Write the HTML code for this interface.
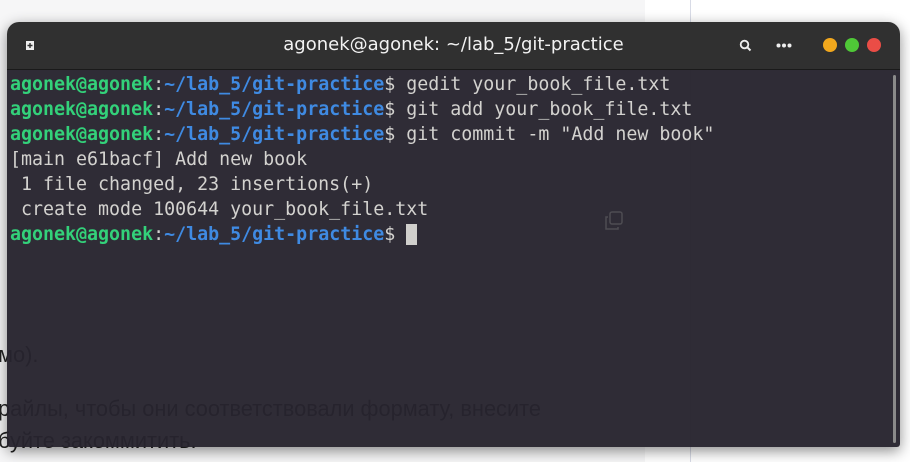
<!DOCTYPE html>
<html><head><meta charset="utf-8"><style>
body{margin:0;width:910px;height:462px;overflow:hidden;background:#fff;position:relative;font-family:"Liberation Sans",sans-serif}
.bgl{position:absolute;left:0;top:0;width:645px;height:462px;background:#f6f6f7}
.vl{position:absolute;left:690px;top:0;width:1px;height:462px;background:#d8dbe6}
.bt{position:absolute;left:-2px;font-size:22px;color:#222;white-space:nowrap;transform:scaleX(0.99);transform-origin:left}
.win{position:absolute;left:7px;top:22px;width:893px;height:425px;border-radius:12px 12px 3px 3px;overflow:hidden;box-shadow:0 4px 14px rgba(0,0,0,.45)}
.tb{height:47px;background:#303030;position:relative;border-bottom:1px solid #1a1a1a}
.title{position:absolute;left:0;right:0;top:12px;text-align:center;font-family:"DejaVu Sans","Liberation Sans",sans-serif;font-size:18px;color:#f2f2f2}
.body{position:absolute;top:48px;left:0;right:0;bottom:0;background:rgba(38,35,46,.96)}
.term{position:absolute;left:3px;top:2px;font-family:"DejaVu Sans Mono","Liberation Mono",monospace;font-size:18.3px;line-height:25px;color:#d3d2cf;white-space:pre;font-weight:normal}
.g{color:#33d17a;font-weight:bold}.b{color:#3f8ae2;font-weight:bold}
.dot{position:absolute;top:16px;width:14px;height:14px;border-radius:50%}
</style></head><body>
<div class="bgl"></div><div class="vl"></div>
<div class="bt" style="top:342px">мо).</div>
<div class="bt" style="top:396px">райлы, чтобы они соответствовали формату, внесите</div>
<div class="bt" style="top:428px">буйте закоммитить.</div>
<div class="win">
 <div class="tb">
  <svg style="position:absolute;left:17px;top:18px" width="12" height="11" viewBox="0 0 12 11"><path d="M2 1h8v9H2z" fill="#eee"/><path d="M6 3v5M3.5 5.5h5" stroke="#303030" stroke-width="1.4"/></svg>
  <div class="title">agonek@agonek: ~/lab_5/git-practice</div>
  <svg style="position:absolute;left:732px;top:17px" width="14" height="14" viewBox="0 0 14 14"><circle cx="5.5" cy="5.5" r="3.8" stroke="#eee" stroke-width="1.8" fill="none"/><path d="M8.3 8.3l3.2 3.2" stroke="#eee" stroke-width="2"/></svg>
  <svg style="position:absolute;left:769px;top:21px" width="16" height="5"><circle cx="2.5" cy="2.5" r="2" fill="#eee"/><circle cx="8" cy="2.5" r="2" fill="#eee"/><circle cx="13.5" cy="2.5" r="2" fill="#eee"/></svg>
  <div class="dot" style="left:816px;background:#f2a81d"></div>
  <div class="dot" style="left:838px;background:#4fc837"></div>
  <div class="dot" style="left:860px;background:#ea4d46"></div>
 </div>
 <div class="body">
  <div class="term"><span class="g">agonek@agonek</span>:<span class="b">~/lab_5/git-practice</span>$ gedit your_book_file.txt
<span class="g">agonek@agonek</span>:<span class="b">~/lab_5/git-practice</span>$ git add your_book_file.txt
<span class="g">agonek@agonek</span>:<span class="b">~/lab_5/git-practice</span>$ git commit -m "Add new book"
[main e61bacf] Add new book
 1 file changed, 23 insertions(+)
 create mode 100644 your_book_file.txt
<span class="g">agonek@agonek</span>:<span class="b">~/lab_5/git-practice</span>$ <span style="background:#d0cfcc"> </span></div>
  <div style="position:absolute;left:886px;top:5px;width:3px;height:368px;background:#8a8a8a;border-radius:2px"></div>
  <svg style="position:absolute;left:596px;top:140px;opacity:.35" width="22" height="22" viewBox="0 0 22 22"><rect x="7" y="2" width="12" height="12" rx="2" stroke="#888" stroke-width="1.5" fill="none"/><path d="M5 7H3v12h12v-2" stroke="#888" stroke-width="1.5" fill="none"/></svg>
 </div>
</div>
</body></html>
